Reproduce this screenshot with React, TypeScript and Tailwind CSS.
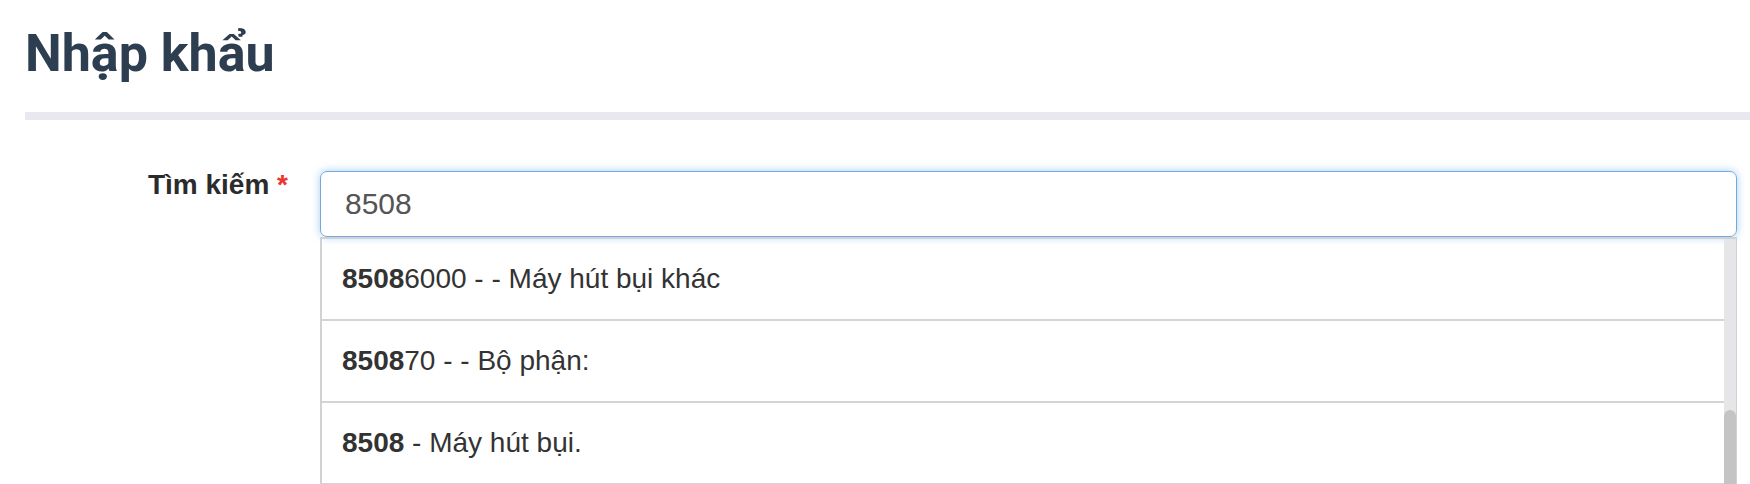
import React from "react";

const RESULTS = [
  { match: "8508", rest: "6000 - - Máy hút bụi khác" },
  { match: "8508", rest: "70 - - Bộ phận:" },
  { match: "8508", rest: " - Máy hút bụi." },
];

export default function App() {
  return (
    <div className="h-[484px] overflow-hidden bg-white">
      <h1 className="ml-[25px] mt-[28px] font-['Roboto',sans-serif] text-[52px] font-bold leading-[52px] text-[#2c3e50]">
        Nhập khẩu
      </h1>
      <div className="ml-[25px] mt-[32px] h-[8px] bg-[#e8e8ee]" />

      <div className="mt-[51px] flex font-['Liberation_Sans',Arial,sans-serif]">
        <label className="w-[320px] shrink-0 pr-[32px] text-right text-[28px] font-bold leading-[28px] text-[#2b2b2b]">
          Tìm kiếm <span className="text-[#e8372c]">*</span>
        </label>

        <div className="mr-[13px] flex-1">
          <input
            type="text"
            defaultValue="8508"
            className="block h-[66px] w-full rounded-[7px] border-[1.5px] border-[#72a9e4] px-[24px] text-[30px] text-[#555] shadow-[0_0_8px_rgba(102,175,233,0.6)] outline-none"
          />

          {/* autocomplete results */}
          <div className="flex h-[260px] border-t-2 border-l-2 border-[#d2d2d2]">
            <ul className="flex-1">
              {RESULTS.map((r, i) => (
                <li
                  key={i}
                  className="flex h-[82px] items-center border-b-2 border-[#d4d4d4] pl-[20px] text-[28px] text-[#333]"
                >
                  <span className="whitespace-pre">
                    <b>{r.match}</b>
                    {r.rest}
                  </span>
                </li>
              ))}
            </ul>
            <div className="flex w-[13px] flex-col border-r border-[#d0d0d2] bg-[#e6e6e8]">
              <div className="mt-[171px] flex-1 rounded-t-[6px] bg-[#c4c4c4]" />
            </div>
          </div>
        </div>
      </div>
    </div>
  );
}
